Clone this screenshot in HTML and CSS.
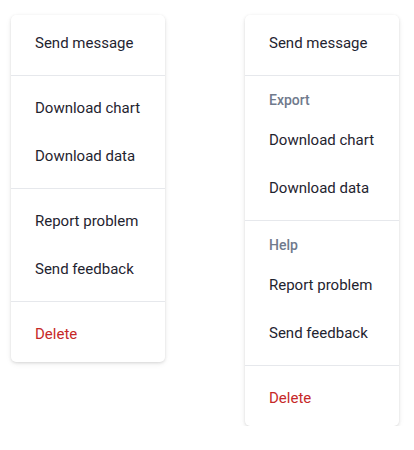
FILE: index.html
```html
<!DOCTYPE html>
<html>
<head>
<meta charset="utf-8">
<link rel="stylesheet" href="styles.css">
</head>
<body>
<div class="page">
  <div class="menu">
    <div class="item">Send message</div>
    <div class="sep"></div>
    <div class="item">Download chart</div>
    <div class="item">Download data</div>
    <div class="sep"></div>
    <div class="item">Report problem</div>
    <div class="item">Send feedback</div>
    <div class="sep"></div>
    <div class="item danger">Delete</div>
  </div>
  <div class="menu">
    <div class="item">Send message</div>
    <div class="sep"></div>
    <div class="label">Export</div>
    <div class="item">Download chart</div>
    <div class="item">Download data</div>
    <div class="sep"></div>
    <div class="label">Help</div>
    <div class="item">Report problem</div>
    <div class="item">Send feedback</div>
    <div class="sep"></div>
    <div class="item danger">Delete</div>
  </div>
</div>
</body>
</html>
```
FILE: styles.css
```css
html, body {
  margin: 0;
  padding: 0;
  background: #ffffff;
}
body {
  font-family: Roboto, "Liberation Sans", sans-serif;
}
.page {
  display: flex;
  align-items: flex-start;
  gap: 80px;
  padding: 15px 0 0 11px;
}
.menu {
  width: 154px;
  background: #fff;
  border-radius: 5px;
  box-shadow: 0 1px 3px rgba(0,0,0,0.12), 0 2px 6px rgba(0,0,0,0.06);
  padding: 4px 0;
  box-sizing: border-box;
}
.item {
  height: 48px;
  display: flex;
  align-items: center;
  padding: 0 24px;
  font-size: 15px;
  color: #1f2430;
}
.item.danger {
  color: #c62828;
}
.label {
  height: 32px;
  display: flex;
  align-items: center;
  padding: 0 24px;
  font-size: 14px;
  font-weight: 500;
  color: #707a8c;
}
.sep {
  height: 1px;
  background: #e6e8ec;
  margin: 8px 0;
}
```
